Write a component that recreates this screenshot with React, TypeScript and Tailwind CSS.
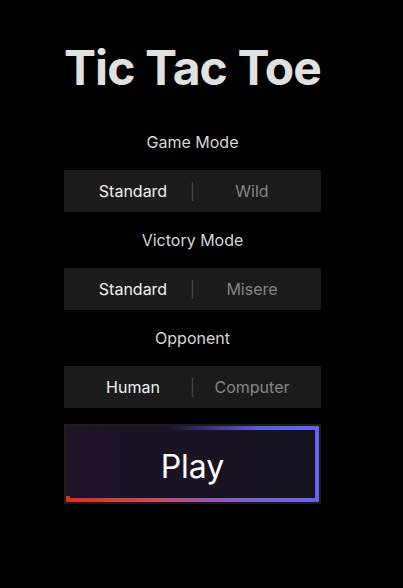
import { useState } from 'react';

interface ToggleProps {
    label: string;
    options: [string, string];
    value: number;
    onChange: (v: number) => void;
}

function Toggle({ label, options, value, onChange }: ToggleProps) {
    return (
        <div className="flex flex-col items-center gap-4 w-full">
            <p className="text-base leading-6 text-[#d6d6d6]">{label}</p>
            <div className="flex items-center justify-center w-full h-[42px] bg-[#1b1b1b]">
                <button
                    onClick={() => onChange(0)}
                    className={`w-[110px] text-center text-base ${value === 0 ? 'text-[#f2f2f2]' : 'text-[#858585]'}`}
                >
                    {options[0]}
                </button>
                <span className="w-[9px] text-center text-base text-[#4a4a4a]">|</span>
                <button
                    onClick={() => onChange(1)}
                    className={`w-[110px] text-center text-base ${value === 1 ? 'text-[#f2f2f2]' : 'text-[#858585]'}`}
                >
                    {options[1]}
                </button>
            </div>
        </div>
    );
}

export default function App() {
    const [mode, setMode] = useState(0);
    const [victory, setVictory] = useState(0);
    const [opponent, setOpponent] = useState(0);

    return (
        <div className="min-h-screen bg-black flex pl-[64px] font-['Inter','Liberation_Sans',sans-serif]">
            <div className="w-[257px] flex flex-col items-center gap-4 pt-[44px]">
                <h1 className="text-[48px] leading-[48px] font-bold tracking-[-0.9px] text-[#e1e1e1] whitespace-nowrap mb-[22px]">
                    Tic Tac Toe
                </h1>

                <Toggle label="Game Mode" options={['Standard', 'Wild']} value={mode} onChange={setMode} />
                <Toggle label="Victory Mode" options={['Standard', 'Misere']} value={victory} onChange={setVictory} />
                <Toggle label="Opponent" options={['Human', 'Computer']} value={opponent} onChange={setOpponent} />

                <button className="w-full h-[80px] bg-[#1c1c1c] p-[2px]">
                    <div className="relative w-full h-full flex items-center justify-center bg-[linear-gradient(90deg,#1f1229,#14141f)]">
                        {/* gradient edges */}
                        <div className="absolute top-0 left-0 right-0 h-[4px] bg-[linear-gradient(90deg,transparent_40%,#5a5ad6_75%,#6366f1)]" />
                        <div className="absolute top-0 right-0 bottom-0 w-[4px] bg-[#6366f1]" />
                        <div className="absolute bottom-0 left-0 right-0 h-[4px] bg-[linear-gradient(90deg,#e0301e,#c94a5a_35%,#8a5ab8_60%,#6366f1)]" />
                        <div className="absolute bottom-[4px] left-0 w-[4px] h-[2px] bg-[#e0301e]" />
                        <span className="text-[32px] leading-none text-white pt-[5px]">Play</span>
                    </div>
                </button>
            </div>
        </div>
    );
}
